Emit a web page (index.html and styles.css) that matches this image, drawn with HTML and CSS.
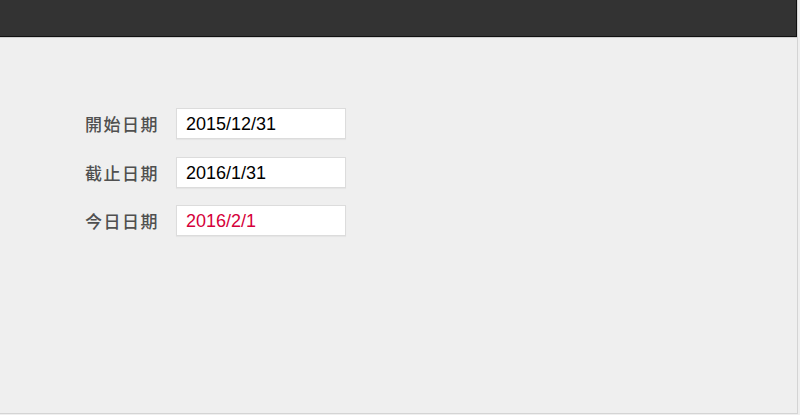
FILE: index.html
```html
<!DOCTYPE html>
<html lang="zh-Hant">
<head>
<meta charset="utf-8">
<link rel="stylesheet" href="styles.css">
</head>
<body>
<div class="frame">
  <header class="topbar"></header>
  <main class="content">
    <form class="dates">
      <div class="row">
        <label class="label">開始日期</label>
        <div class="field">2015/12/31</div>
      </div>
      <div class="row">
        <label class="label">截止日期</label>
        <div class="field">2016/1/31</div>
      </div>
      <div class="row">
        <label class="label">今日日期</label>
        <div class="field today">2016/2/1</div>
      </div>
    </form>
  </main>
</div>
</body>
</html>
```
FILE: styles.css
```css
html, body {
  margin: 0;
  padding: 0;
  background: #efefef;
}
.frame {
  width: 797px;
  height: 413px;
  border-right: 1px solid #d4d4d4;
  border-bottom: 1px solid #d4d4d4;
  background: #efefef;
  display: flex;
  flex-direction: column;
}
.topbar {
  height: 36px;
  background: #333333;
  border-bottom: 1px solid #111;
  border-right: 1px solid #111;
  box-shadow: 0 1px 0 #cfcfcf;
}
.content {
  padding: 71px 0 0 85px;
}
.dates {
  display: flex;
  flex-direction: column;
  gap: 17.5px;
}
.row {
  display: flex;
  align-items: center;
  gap: 17px;
}
.label {
  width: 74px;
  font-family: "Noto Sans CJK TC", "Noto Sans CJK SC", sans-serif;
  font-size: 17px;
  font-weight: 500;
  letter-spacing: 1.5px;
  color: #505050;
  white-space: nowrap;
}
.field {
  box-sizing: border-box;
  width: 170px;
  height: 31px;
  padding: 1px 9px 0;
  background: #fff;
  border: 1px solid #dcdcdc;
  box-shadow: 0 1px 1px rgba(0,0,0,0.04);
  font-family: "Liberation Sans", Arial, sans-serif;
  font-size: 18px;
  line-height: 29px;
  color: #000;
}
.today {
  color: #d6003a;
}
```
